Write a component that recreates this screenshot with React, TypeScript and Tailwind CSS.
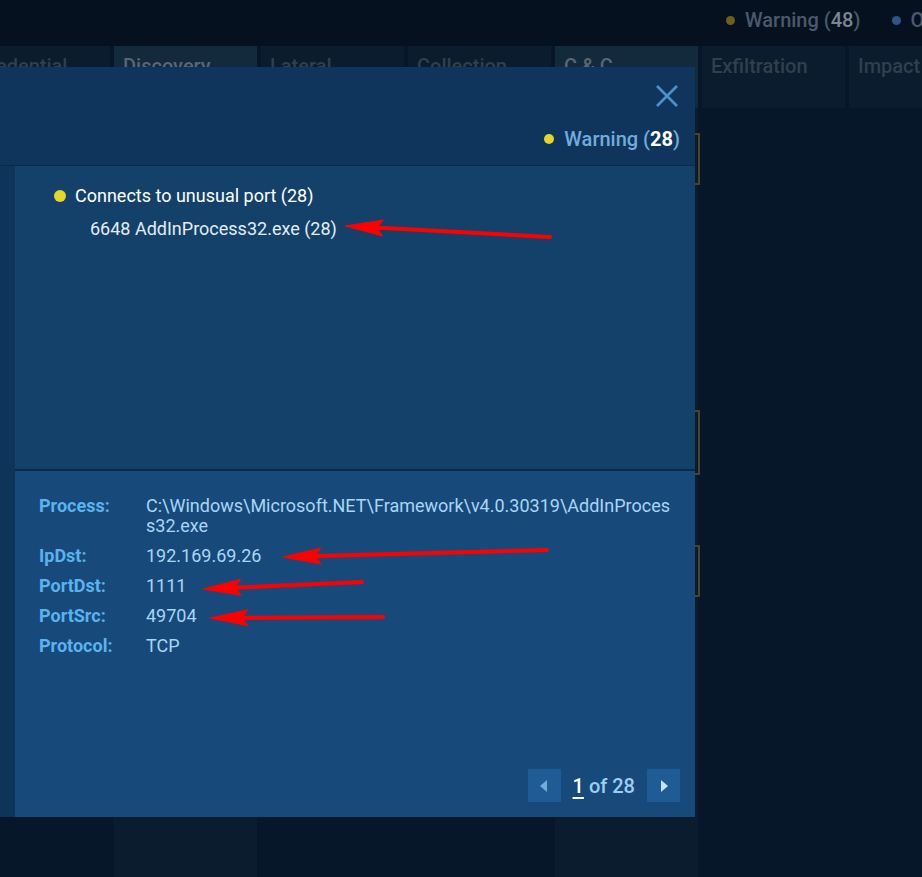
import React from 'react';

const font = { fontFamily: 'Roboto, "Liberation Sans", sans-serif' };

const tabs = [
  { name: 'Credential', light: false },
  { name: 'Discovery', light: true },
  { name: 'Lateral', light: false },
  { name: 'Collection', light: false },
  { name: 'C & C', light: true },
  { name: 'Exfiltration', light: false },
  { name: 'Impact', light: false },
];

const details = [
  { label: 'Process:', value: 'C:\\Windows\\Microsoft.NET\\Framework\\v4.0.30319\\AddInProcess32.exe' },
  { label: 'IpDst:', value: '192.169.69.26' },
  { label: 'PortDst:', value: '1111' },
  { label: 'PortSrc:', value: '49704' },
  { label: 'Protocol:', value: 'TCP' },
];

const arrows = [
  { tip: [345, 226], tail: [550, 237] },
  { tip: [283, 557], tail: [547, 550] },
  { tip: [203, 589], tail: [362, 582] },
  { tip: [210, 618], tail: [383, 617] },
];

const Arrow = ({ tip, tail }: { tip: number[]; tail: number[] }) => {
  const dx = tail[0] - tip[0];
  const dy = tail[1] - tip[1];
  const len = Math.sqrt(dx * dx + dy * dy);
  const ux = dx / len;
  const uy = dy / len;
  const bx = tip[0] + ux * 38;
  const by = tip[1] + uy * 38;
  const px = -uy * 8;
  const py = ux * 8;
  const pts = `${tip[0]},${tip[1]} ${bx + px},${by + py} ${bx + ux * -6},${by + uy * -6} ${bx - px},${by - py}`;
  return (
    <g fill="#ff0000" stroke="#ff0000">
      <line x1={bx - ux * 4} y1={by - uy * 4} x2={tail[0]} y2={tail[1]} strokeWidth={4} strokeLinecap="round" />
      <polygon points={pts} strokeWidth={1} strokeLinejoin="round" />
    </g>
  );
};

const Board = () => {
  return (
    <div className="flex h-full flex-col">
      <div className="flex h-[46px] shrink-0 items-center gap-[32px] whitespace-nowrap bg-[#06111f] pb-[6px] pl-[726px] text-[20px] font-medium">
        <span className="flex items-center gap-[10px] text-[#4a5a6c]">
          <span className="h-[9px] w-[9px] shrink-0 rounded-full bg-[#6b611c]" />
          <span>
            Warning (<span className="text-[#7c8590]">48</span>)
          </span>
        </span>
        <span className="flex items-center gap-[9px] text-[#4a5a6c]">
          <span className="h-[9px] w-[9px] shrink-0 rounded-full bg-[#2c568a]" />
          <span>Other (12)</span>
        </span>
      </div>
      <div className="ml-[-33px] flex flex-1 gap-[4px] bg-[#07162a]">
        {tabs.map((t) => (
          <div key={t.name} className={`flex w-[143px] shrink-0 flex-col ${t.light ? 'bg-[#0a1c2d]' : 'bg-[#07172a]'}`}>
            <div className={`h-[62px] px-[9px] pt-[5px] text-[20px] font-medium ${t.light ? 'bg-[#13293c] text-[#5a6674]' : 'bg-[#0b1c2e] text-[#323f4c]'}`}>
              {t.name}
            </div>
            {t.name === 'C & C' && (
              <div className="flex flex-col">
                <div className="mt-[25px] ml-[4px] mr-[-2px] h-[52px] border-2 border-[#4a4520]" />
                <div className="mt-[225px] ml-[4px] mr-[-2px] h-[65px] border-2 border-[#4a4520]" />
                <div className="mt-[70px] ml-[4px] mr-[-2px] h-[52px] border-2 border-[#4a4520]" />
              </div>
            )}
          </div>
        ))}
      </div>
    </div>
  );
};

const Modal = () => {
  return (
    <div className="absolute left-0 top-[67px] flex h-[750px] w-[695px] flex-col">
      <div className="relative h-[99px] shrink-0 border-b border-[#0b2948] bg-[#0f355c]">
        <svg className="absolute right-[17px] top-[18px]" width="22" height="22" viewBox="0 0 22 22">
          <path d="M1 1 L21 21 M21 1 L1 21" stroke="#4b92cc" strokeWidth="2.6" />
        </svg>
        <div className="absolute bottom-[11px] right-[15px] flex items-center gap-[10px] text-[20px] font-medium text-[#72acdb]">
          <span className="h-[10px] w-[10px] rounded-full bg-[#e4d42c]" />
          <span>
            Warning (<span className="font-bold text-white">28</span>)
          </span>
        </div>
      </div>
      <div className="flex flex-1">
        <div className="w-[15px] shrink-0 bg-[#0f3459]" />
        <div className="flex flex-1 flex-col">
          <div className="h-[303px] shrink-0 bg-[#134169] pl-[39px] pt-[19px] text-[18px] leading-[22px]">
            <div className="flex items-center gap-[9px] text-white">
              <span className="h-[12px] w-[12px] shrink-0 rounded-full bg-[#e6d52b]" />
              <span>Connects to unusual port (28)</span>
            </div>
            <div className="mt-[11px] pl-[36px] text-[#e4ecf4]">6648 AddInProcess32.exe (28)</div>
          </div>
          <div className="h-[2px] shrink-0 bg-[#0b2a48]" />
          <div className="flex flex-1 flex-col bg-[#174a7b] pl-[24px] pr-[15px] pt-[25px] pb-[15px]">
            <div className="flex flex-col gap-[10px] text-[18px] leading-[20px]">
              {details.map((d) => (
                <div key={d.label} className="flex">
                  <div className="w-[107px] shrink-0 font-bold text-[#5ab3ee]">{d.label}</div>
                  <div className="w-[530px] break-all text-[#a9d5f6]">{d.value}</div>
                </div>
              ))}
            </div>
            <div className="mt-auto flex items-center justify-end">
              <div className="flex h-[33px] w-[33px] items-center justify-center bg-[#1f5c96]">
                <svg width="8" height="12" viewBox="0 0 8 12">
                  <path d="M7 0 L0 6 L7 12 Z" fill="#74acd9" />
                </svg>
              </div>
              <div className="ml-[12px] mr-[12px] text-[20px] font-medium text-[#9ccef4]">
                <span className="text-white underline underline-offset-[4px]">1</span> of 28
              </div>
              <div className="flex h-[33px] w-[33px] items-center justify-center bg-[#1f5c96]">
                <svg width="8" height="12" viewBox="0 0 8 12">
                  <path d="M1 0 L8 6 L1 12 Z" fill="#c5e2fa" />
                </svg>
              </div>
            </div>
          </div>
        </div>
      </div>
    </div>
  );
};

const App = () => {
  return (
    <div className="relative h-[877px] w-[922px] overflow-hidden bg-[#06111f]" style={font}>
      <Board />
      <Modal />
      <svg className="pointer-events-none absolute left-0 top-0" width="922" height="877">
        {arrows.map((a, i) => (
          <Arrow key={i} tip={a.tip} tail={a.tail} />
        ))}
      </svg>
    </div>
  );
};

export default App;
